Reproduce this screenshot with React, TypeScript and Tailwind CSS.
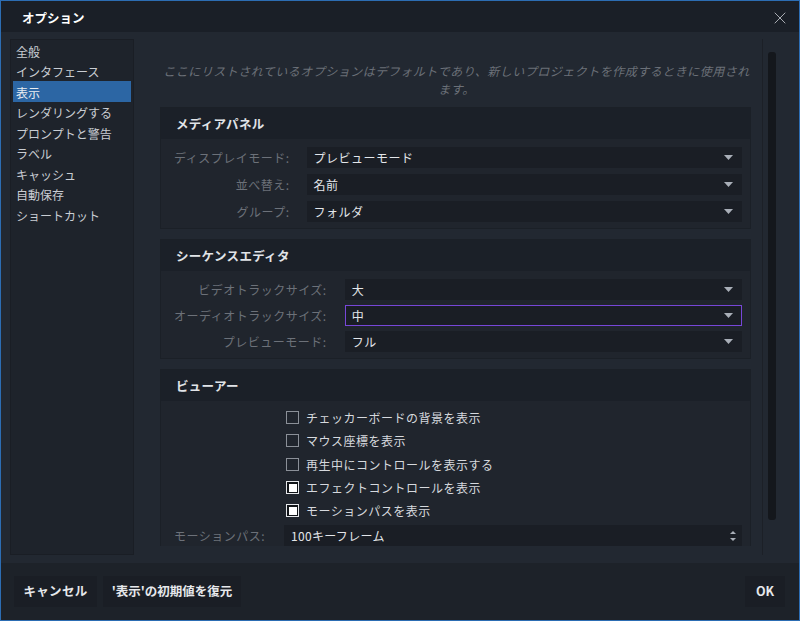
import { X } from "lucide-react";

const font = { fontFamily: '"Noto Sans CJK JP", "Noto Sans", sans-serif' };

const navItems = [
  "全般",
  "インタフェース",
  "表示",
  "レンダリングする",
  "プロンプトと警告",
  "ラベル",
  "キャッシュ",
  "自動保存",
  "ショートカット",
];

function Caret() {
  return (
    <svg width="9" height="5" viewBox="0 0 9 5" className="shrink-0">
      <path d="M0 0 H9 L4.5 5 Z" fill="#a9afb8" />
    </svg>
  );
}

function Select({ value, focused }: { value: string; focused?: boolean }) {
  return (
    <div
      className={
        "h-[21px] flex items-center justify-between bg-[#1a1e25] text-[12px] tracking-[0.5px] text-[#e3e6ea] " +
        (focused ? "border border-[#7747d8] pl-[6px] pr-[8px]" : "pl-[7px] pr-[9px]")
      }
    >
      <span className="pt-[1px]">{value}</span>
      <Caret />
    </div>
  );
}

function Label({ children }: { children: string }) {
  return (
    <div className="h-[21px] flex items-center justify-end pt-[1px] text-[12px] tracking-[0.5px] text-[#6c7179] whitespace-nowrap">
      {children}
    </div>
  );
}

function Group({ title, children }: { title: string; children: React.ReactNode }) {
  return (
    <div className="border border-[#1b2027] bg-[#20252d]">
      <div className="h-[31px] flex items-center pl-[15px] pt-[1px] bg-[#1b2028] text-[12.5px] font-bold text-[#e1e4e8] tracking-[0.3px]">
        {title}
      </div>
      {children}
    </div>
  );
}

function Check({ label, checked }: { label: string; checked?: boolean }) {
  return (
    <div className="col-start-2 h-[23.3px] flex items-center gap-[7px] pl-[2px] text-[12px] tracking-[0.5px] text-[#d6d9de]">
      {checked ? (
        <span className="w-[13px] h-[13px] border border-[#e6e8eb] bg-[#111418] flex items-center justify-center">
          <span className="w-[8px] h-[8px] bg-white" />
        </span>
      ) : (
        <span className="w-[13px] h-[13px] border border-[#8b9098]" />
      )}
      <span className="pt-[1px]">{label}</span>
    </div>
  );
}

export default function App() {
  return (
    <div
      style={font}
      className="w-[800px] h-[621px] border border-[#2c6db3] bg-[#222831] flex flex-col overflow-hidden"
    >
      <div className="h-[31px] shrink-0 bg-[#1a1f27] flex items-center justify-between pl-[21px] pr-[9px] pt-[3px]">
        <span className="text-[12.5px] font-bold text-white">オプション</span>
        <X className="w-[20px] h-[20px] text-[#c5c9cf]" strokeWidth={1} />
      </div>

      <div className="flex-1 flex min-h-0 pl-[9px] pr-[19px] pt-[7px] pb-[8px]">
        <div className="w-[124px] shrink-0 border border-[#1a1e25] bg-[#1e232b] px-[2px] flex flex-col">
          {navItems.map((item) => (
            <div
              key={item}
              className={
                "h-[20.5px] flex items-center pl-[3px] pt-[3px] text-[12px] " +
                (item === "表示" ? "bg-[#2c66a4] text-[#e8ecf1]" : "text-[#c9cdd3]")
              }
            >
              {item}
            </div>
          ))}
        </div>

        <div className="flex-1 flex ml-[8px] min-w-0">
          <div className="flex-1 flex flex-col pb-[9px] border-r border-[#1c2027] min-w-0">
            <div className="flex-1 overflow-hidden pl-[18px] pr-[11px]">
              <p className="pt-[23px] pb-[9px] -mr-[2px] text-center italic text-[12px] tracking-[0.5px] leading-[18px] text-[#6b7078]">
                ここにリストされているオプションはデフォルトであり、新しいプロジェクトを作成するときに使用されます。
              </p>

              <div className="flex flex-col gap-[10px]">
                <Group title="メディアパネル">
                  <div className="grid grid-cols-[auto_1fr] gap-x-[17px] gap-y-[6px] pl-[13px] pr-[8px] pt-[8px] pb-[6px]">
                    <Label>ディスプレイモード:</Label>
                    <Select value="プレビューモード" />
                    <Label>並べ替え:</Label>
                    <Select value="名前" />
                    <Label>グループ:</Label>
                    <Select value="フォルダ" />
                  </div>
                </Group>

                <Group title="シーケンスエディタ">
                  <div className="grid grid-cols-[auto_1fr] gap-x-[18px] gap-y-[5px] pl-[13px] pr-[8px] pt-[8px] pb-[6px]">
                    <Label>ビデオトラックサイズ:</Label>
                    <Select value="大" />
                    <Label>オーディオトラックサイズ:</Label>
                    <Select value="中" focused />
                    <Label>プレビューモード:</Label>
                    <Select value="フル" />
                  </div>
                </Group>

                <Group title="ビューアー">
                  <div className="grid grid-cols-[auto_1fr] gap-x-[19px] pl-[13px] pr-[8px] pt-[5px] pb-[6px]">
                    <Check label="チェッカーボードの背景を表示" />
                    <Check label="マウス座標を表示" />
                    <Check label="再生中にコントロールを表示する" />
                    <Check label="エフェクトコントロールを表示" checked />
                    <Check label="モーションパスを表示" checked />
                    <div className="mt-[3px]">
                      <Label>モーションパス:</Label>
                    </div>
                    <div className="mt-[3px] h-[21px] flex items-center justify-between pl-[7px] pr-[6px] bg-[#1a1e25] text-[12px] tracking-[0.3px] text-[#e3e6ea]">
                      <span className="pt-[1px]">100キーフレーム</span>
                      <span className="flex flex-col gap-[4px]">
                        <svg width="6" height="3" viewBox="0 0 6 3">
                          <path d="M0 3 H6 L3 0 Z" fill="#a9afb8" />
                        </svg>
                        <svg width="6" height="3" viewBox="0 0 6 3">
                          <path d="M0 0 H6 L3 3 Z" fill="#a9afb8" />
                        </svg>
                      </span>
                    </div>
                  </div>
                </Group>
              </div>
            </div>
          </div>

          <div className="w-[17px] shrink-0 flex justify-center pt-[13px] pb-[35px]">
            <div className="w-[8px] h-full rounded-[3px] bg-[#14171c]" />
          </div>
        </div>
      </div>

      <div className="h-[57px] shrink-0 bg-[#1d2229] flex items-center justify-between pl-[13px] pr-[14px]">
        <div className="flex gap-[6px]">
          <button className="h-[31px] w-[83px] bg-[#1a1e25] text-[12.5px] font-bold text-[#e6e8eb] tracking-[0.3px]">
            キャンセル
          </button>
          <button className="h-[31px] w-[138px] bg-[#1a1e25] text-[12.5px] font-bold text-[#e6e8eb]">
            '表示'の初期値を復元
          </button>
        </div>
        <button className="h-[31px] w-[40px] bg-[#1a1e25] text-[12.5px] font-bold text-[#e6e8eb]">
          OK
        </button>
      </div>
    </div>
  );
}
